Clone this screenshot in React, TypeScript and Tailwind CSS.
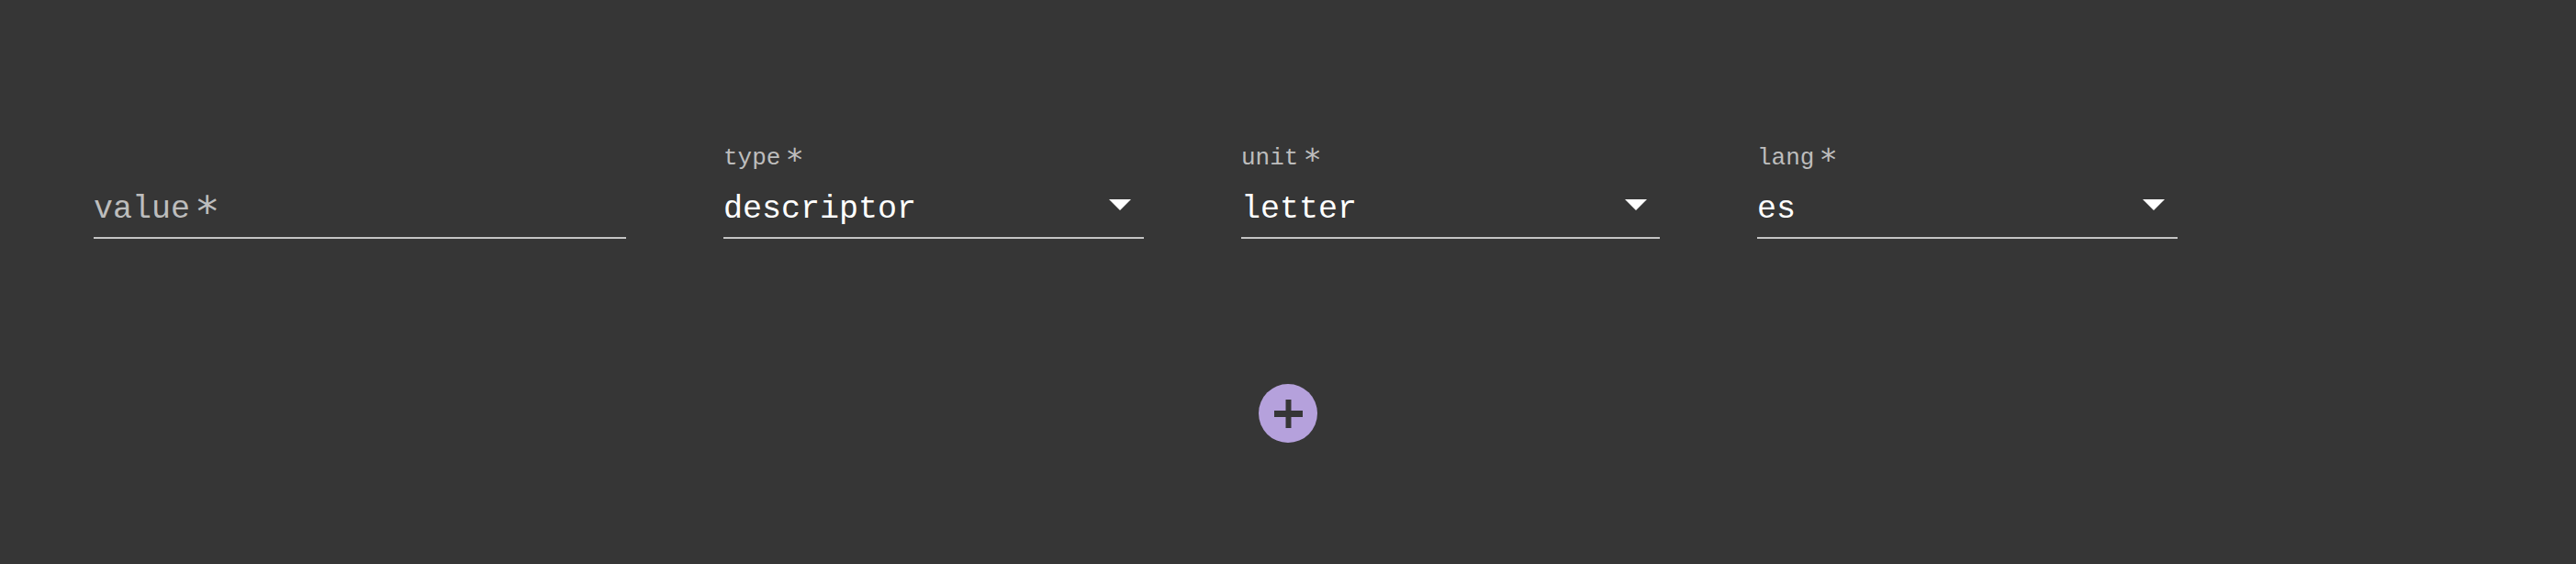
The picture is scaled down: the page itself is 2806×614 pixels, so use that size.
import React from 'react';

const mono = { fontFamily: '"Liberation Mono", "DejaVu Sans Mono", monospace' };

interface SelectFieldProps {
  label: string;
  value: string;
  width: string;
}

const Star: React.FC = () => (
  <span className="ml-[5px] text-[1.3em] leading-[0] font-['DejaVu_Sans_Mono',monospace]">{'\u2217'}</span>
);

const SelectField: React.FC<SelectFieldProps> = ({ label, value, width }) => (
  <div className={`flex flex-col ${width}`}>
    <label className="block h-[30px] text-[26px] leading-[30px] text-[#bdbdbd]">
      {label}
      <Star />
    </label>
    <div className="mt-[21px] flex justify-between border-b-2 border-[#c4c4c4] pb-[10px]">
      <span className="text-[35px] leading-[40px] text-white">{value}</span>
      <svg width="24" height="12" viewBox="0 0 24 12" className="mt-[9px] mr-[14px]">
        <path d="M0 0 L24 0 L12 12 Z" fill="#ffffff" />
      </svg>
    </div>
  </div>
);

export default function App() {
  return (
    <div className="w-[2806px] h-[614px] bg-[#363636] flex flex-col" style={mono}>
      <div className="flex items-end gap-[106px] pl-[102px] pt-[157px]">
        <div className="w-[580px] border-b-2 border-[#c4c4c4] pb-[10px]">
          <span className="block h-[40px] text-[35px] leading-[40px] text-[#bdbdbd]">
            value
            <Star />
          </span>
        </div>
        <SelectField label="type" value="descriptor" width="w-[458px]" />
        <SelectField label="unit" value="letter" width="w-[456px]" />
        <SelectField label="lang" value="es" width="w-[458px]" />
      </div>
      <div className="mt-[158px] flex justify-center">
        <button className="w-[64px] h-[64px] rounded-full bg-[#b5a1dc] flex items-center justify-center">
          <svg width="31" height="31" viewBox="0 0 31 31">
            <rect x="0" y="12" width="31" height="7" fill="#363636" />
            <rect x="12.5" y="0" width="6" height="31" fill="#363636" />
          </svg>
        </button>
      </div>
    </div>
  );
}
